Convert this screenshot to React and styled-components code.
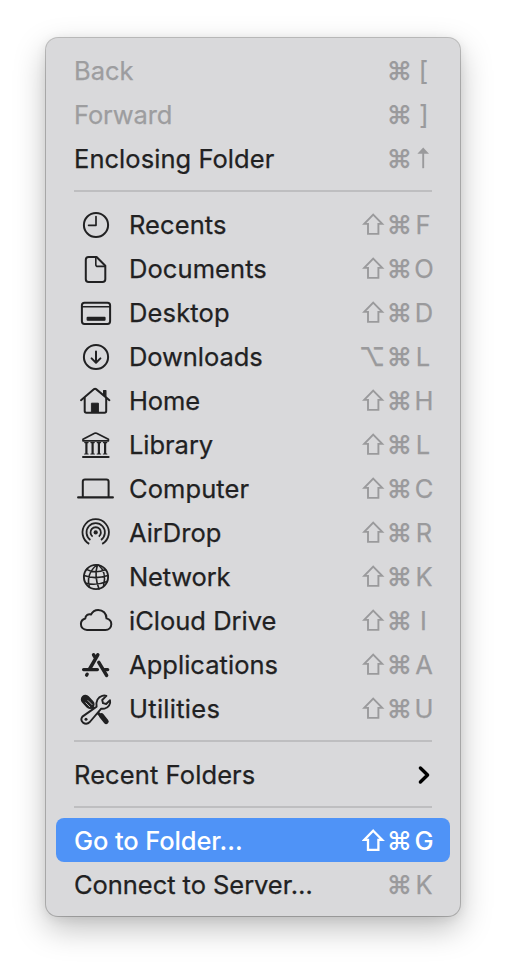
import React from "react";
import styled, { createGlobalStyle } from "styled-components";

const GlobalStyle = createGlobalStyle`
  * { box-sizing: border-box; }
  html, body { margin: 0; background: #fff; }
  body { font-family: Inter, "Liberation Sans", sans-serif; }
`;

const Page = styled.main`
  width: 506px;
  height: 970px;
  padding: 38px 46px 0;
  overflow: hidden;
`;

const Menu = styled.div`
  width: 414px;
  height: 878px;
  padding: 10px;
  border-radius: 12px;
  background: #d9d9db;
  box-shadow:
    0 0 0 1px rgba(0, 0, 0, 0.22),
    0 12px 32px rgba(0, 0, 0, 0.26),
    0 2px 12px rgba(0, 0, 0, 0.08);
`;

const Row = styled.div`
  display: flex;
  align-items: center;
  height: 44px;
  padding: 0 14.5px 0 18px;
  border-radius: 8px;
  font-size: 25.5px;
  font-weight: ${(p) => (p.$active ? 500 : 400)};
  -webkit-text-stroke: ${(p) => (p.$active ? 0 : 0.25)}px;
  color: ${(p) => (p.$active ? "#fff" : p.$disabled ? "#9d9d9f" : "#212122")};
  background: ${(p) => (p.$active ? "#4f93f7" : "transparent")};
`;

const IconSlot = styled.svg`
  flex: none;
  width: 40px;
  height: 44px;
  margin: 0 13px 0 2px;
  fill: none;
  stroke: currentColor;
  stroke-width: 2;
  stroke-linecap: round;
  stroke-linejoin: round;
`;

const Label = styled.span`
  flex: 1;
  height: 44px;
  padding-top: 1px;
  line-height: 44px;
  letter-spacing: ${(p) => p.$tracking || 0}px;
  white-space: nowrap;
`;

const Shortcut = styled.span`
  display: flex;
  height: 44px;
  line-height: 44px;
  color: ${(p) => (p.$active ? "#fff" : "#9a9a9c")};
`;

const Key = styled.span`
  display: flex;
  justify-content: center;
  width: ${(p) => (p.$last ? 23 : 26)}px;
  padding: 1px ${(p) => p.$nudge || 0}px 0 0;
  font-weight: ${(p) => (p.$modifier ? 550 : "inherit")};
`;

const KeyGlyph = styled.svg`
  flex: none;
  width: 24px;
  height: 44px;
  margin-top: -1px;
  fill: none;
  stroke: currentColor;
  stroke-width: ${(p) => (p.$active ? 2.3 : 1.9)};
`;

const Separator = styled.div`
  height: 22px;
  padding: 10px 18px;

  &::before {
    content: "";
    display: block;
    height: 2px;
    background: #bebec0;
  }
`;

const Chevron = styled.svg`
  width: 14px;
  height: 22px;
  margin: 1px 4.5px 0 0;
  fill: none;
  stroke: #000;
  stroke-width: 3.4;
  stroke-linecap: round;
  stroke-linejoin: round;
`;

const icons = {
  recents: (
    <>
      <circle cx="20" cy="23" r="12.1" />
      <path d="M20 14.6V23.3H12.6" strokeWidth="1.7" />
    </>
  ),
  documents: (
    <>
      <path d="M12.6 11H20.6L29.3 19.8V33.2Q29.3 36 26.5 36H12.6Q9.8 36 9.8 33.2V13.8Q9.8 11 12.6 11Z" />
      <path d="M19.8 11.4V18.4Q19.8 20.4 21.8 20.4H29" strokeWidth="1.6" />
    </>
  ),
  desktop: (
    <>
      <rect x="5.9" y="12.7" width="28.2" height="21.2" rx="2.6" />
      <path d="M6.5 16.7H33.7" strokeWidth="1.5" />
      <rect x="11.2" y="27.4" width="17.8" height="2.8" rx="0.4" fill="currentColor" strokeWidth="1.2" />
    </>
  ),
  downloads: (
    <>
      <circle cx="20" cy="23" r="12.1" />
      <path d="M20 17.4V28.4M15.6 24.4L20 28.7L24.4 24.4" />
    </>
  ),
  home: (
    <>
      <path d="M5 22.2L18.1 11.1Q19.1 10.3 20.1 11.1L33.4 22.2" />
      <path d="M8.7 20V33Q8.7 34.7 10.4 34.7H28.5Q30.2 34.7 30.2 33V20" />
      <path d="M27.6 12.6H29.9V18.7L27.6 16.8Z" fill="currentColor" strokeWidth="1.2" />
      <path d="M15.8 25.2H22.4V34.5H15.8Z" fill="currentColor" strokeWidth="1" />
    </>
  ),
  library: (
    <>
      <path d="M7 18.8V17.3L18.6 11.3Q19.6 10.9 20.6 11.3L32.4 17.3V18.8Z" strokeWidth="1.7" />
      <path d="M10.4 20V32M16.6 20V32M22.9 20V32M29.1 20V32" strokeWidth="2.2" strokeLinecap="butt" />
      <path d="M8.7 20.6H12.1M14.9 20.6H18.3M21.2 20.6H24.6M27.4 20.6H30.8M8.7 32H12.1M14.9 32H18.3M21.2 32H24.6M27.4 32H30.8" strokeWidth="1.2" />
      <path d="M7 35H32.6" />
    </>
  ),
  computer: (
    <>
      <path d="M6.8 31V15.6Q6.8 13.4 9 13.4H30.4Q32.6 13.4 32.6 15.6V31" />
      <path d="M2.2 31.4H36.8" strokeWidth="2.3" />
    </>
  ),
  airdrop: (
    <>
      <circle cx="19.7" cy="22.4" r="2.1" fill="currentColor" stroke="none" />
      <path d="M16.6 26.6A5.2 5.2 0 1 1 22.8 26.6M14.4 29.9A9.2 9.2 0 1 1 25 29.9M13.2 33.9A13.2 13.2 0 1 1 26.2 33.9" strokeWidth="1.8" strokeLinecap="butt" />
    </>
  ),
  network: (
    <>
      <circle cx="20" cy="23" r="12.1" strokeWidth="1.9" />
      <path d="M20.8 11Q9.8 20 13.4 33M21.4 11Q18 22 23 35M22.5 11Q31 18 27.6 31.5M10.5 15.4Q19 20 29.5 15.8M8 21.6Q19 25.6 32 21.6M10 29.2Q20 32 31 27.4" strokeWidth="1.6" />
    </>
  ),
  icloud: <path d="M11 31.9C7.2 31.9 4.9 29.2 4.9 26.1C4.9 23.3 6.7 21.2 9.3 20.5C9.3 17.2 12.6 15.5 15 16.5C16.4 13.7 19.1 11.9 22.2 11.9C26.9 11.9 30.5 15.5 30.5 20.4C33.6 21.2 35.3 23.5 35.3 26.2C35.3 29.5 32.8 31.9 29.3 31.9Z" />,
  applications: (
    <>
      <path d="M21.8 12.8L13.6 27M17.6 12.8L19.6 16.2M22.8 20.4L30.6 33.4" strokeWidth="3.5" />
      <path d="M7.6 27.6H21.4M28.6 27.6H31.7M11.2 32.2L10.6 33.2" strokeWidth="3.3" />
    </>
  ),
  utilities: (
    <>
      <path d="M9.4 13.4L14 18.4" strokeWidth="9.2" />
      <path d="M14 19L26 31" strokeWidth="3" />
      <path d="M25.4 29.6L30.2 35.6" strokeWidth="5" />
      <path d="M12 14.6L16 18.6M9.8 16.8L13.8 20.8" stroke="#d9d9db" strokeWidth="0.8" />
      <path
        d="M6.4 30.6L20.6 20.6C19.6 15.2 22 10.9 26.2 9.8Q28.6 9.2 30.4 9.9L26.2 14L27 17.2L30.2 18L34 14.2C35 18 32.4 21.8 28.6 22.6Q26.8 22.9 25.2 22.6L13.8 36Q10.6 39 7 36.6Q4 33.8 6.4 30.6Z"
        fill="#d9d9db"
        strokeWidth="1.9"
      />
      <circle cx="10" cy="33.3" r="1.5" fill="currentColor" stroke="none" />
    </>
  ),
};

const keyGlyphs = {
  "⇧": <path d="M11.2 12.7L20.2 21.9H16.4V31.9H6V21.9H2.2Z" />,
  "↑": (
    <>
      <path d="M11.2 15V32.2" />
      <path d="M11.2 11.4L17 17.8H5.4Z" fill="currentColor" stroke="none" />
    </>
  ),
};

const nudges = { "⌥": 3, F: 2, L: 2, "[": 1, I: 1 };

const groups = [
  [
    { label: "Back", keys: "⌘[", disabled: true },
    { label: "Forward", keys: "⌘]", disabled: true, tracking: -0.12 },
    { label: "Enclosing Folder", keys: "⌘↑", tracking: 0.05 },
  ],
  [
    { label: "Recents", icon: "recents", keys: "⇧⌘F", tracking: 0.08 },
    { label: "Documents", icon: "documents", keys: "⇧⌘O", tracking: 0.08 },
    { label: "Desktop", icon: "desktop", keys: "⇧⌘D", tracking: 0.14 },
    { label: "Downloads", icon: "downloads", keys: "⌥⌘L", tracking: -0.08 },
    { label: "Home", icon: "home", keys: "⇧⌘H", tracking: -0.1 },
    { label: "Library", icon: "library", keys: "⇧⌘L", tracking: -0.05 },
    { label: "Computer", icon: "computer", keys: "⇧⌘C", tracking: 0.08 },
    { label: "AirDrop", icon: "airdrop", keys: "⇧⌘R", tracking: -0.02 },
    { label: "Network", icon: "network", keys: "⇧⌘K", tracking: -0.15 },
    { label: "iCloud Drive", icon: "icloud", keys: "⇧⌘I" },
    { label: "Applications", icon: "applications", keys: "⇧⌘A", tracking: 0.04 },
    { label: "Utilities", icon: "utilities", keys: "⇧⌘U", tracking: 0.28 },
  ],
  [{ label: "Recent Folders", submenu: true, tracking: 0.1 }],
  [
    { label: "Go to Folder…", keys: "⇧⌘G", active: true, tracking: -0.12 },
    { label: "Connect to Server…", keys: "⌘K", tracking: -0.05 },
  ],
];

function ShortcutKey({ symbol, last, active }) {
  const glyph = keyGlyphs[symbol];
  return (
    <Key $last={last} $modifier={!last} $nudge={nudges[symbol]}>
      {glyph ? (
        <KeyGlyph viewBox="0 0 24 44" role="img" aria-label={symbol} $active={active}>
          {glyph}
        </KeyGlyph>
      ) : (
        symbol
      )}
    </Key>
  );
}

function MenuItem({ item }) {
  const keys = item.keys ? [...item.keys] : [];
  return (
    <Row $active={item.active} $disabled={item.disabled}>
      {item.icon && <IconSlot viewBox="0 0 40 44">{icons[item.icon]}</IconSlot>}
      <Label $tracking={item.tracking}>{item.label}</Label>
      {item.submenu && (
        <Chevron viewBox="0 0 14 22">
          <path d="M3.4 4L10.6 11L3.4 18" />
        </Chevron>
      )}
      {keys.length > 0 && (
        <Shortcut $active={item.active}>
          {keys.map((key, i) => (
            <ShortcutKey
              key={key}
              symbol={key}
              last={i === keys.length - 1}
              active={item.active}
            />
          ))}
        </Shortcut>
      )}
    </Row>
  );
}

export default function App() {
  return (
    <Page>
      <GlobalStyle />
      <Menu>
        {groups.map((group, i) => (
          <React.Fragment key={group[0].label}>
            {i > 0 && <Separator />}
            {group.map((item) => (
              <MenuItem key={item.label} item={item} />
            ))}
          </React.Fragment>
        ))}
      </Menu>
    </Page>
  );
}
